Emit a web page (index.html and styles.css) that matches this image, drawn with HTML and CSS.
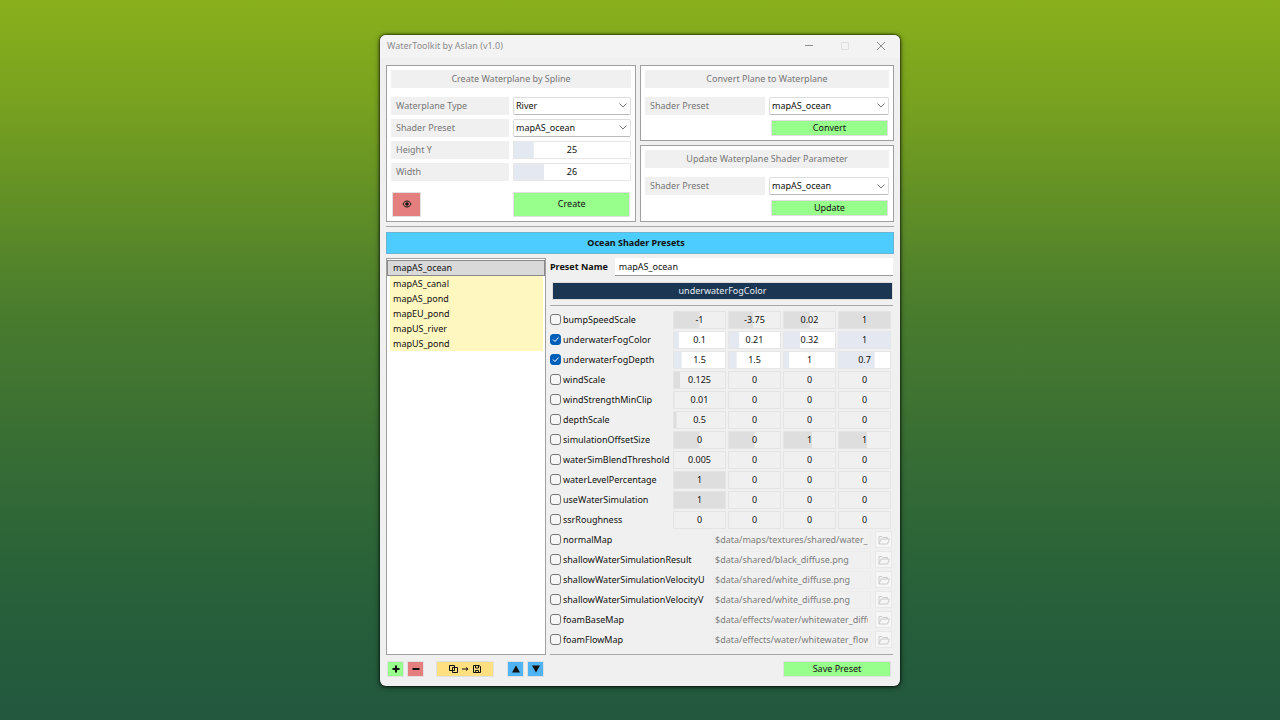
FILE: index.html
```
<!DOCTYPE html>
<html lang="en">
<head>
  <meta charset="UTF-8" />
  <meta name="viewport" content="width=device-width, initial-scale=1" />
  <title>WaterToolkit by Aslan (v1.0)</title>
  <link rel="stylesheet" href="styles.css">
</head>
<body>
  <main class="window">
    <header class="titlebar">
      <h1>WaterToolkit by Aslan (v1.0)</h1>
      <div class="window-buttons">
        <button type="button" aria-label="Minimize"><svg viewBox="0 0 10 10"><path d="M1 4.500h8" /></svg></button>
        <button type="button" class="faded" aria-label="Maximize"><svg viewBox="0 0 10 10"><path d="M1.5 1.5h7v7h-7z" /></svg></button>
        <button type="button" aria-label="Close"><svg viewBox="0 0 10 10"><path d="M1 1l8 8M9 1l-8 8" /></svg></button>
      </div>
    </header>

    <div class="tools">
      <section class="panel create">
        <h2>Create Waterplane by Spline</h2>
        <div class="form-row">
          <label for="plane-type">Waterplane Type</label>
          <select id="plane-type"><option>River</option></select>
        </div>
        <div class="form-row">
          <label for="create-preset">Shader Preset</label>
          <select id="create-preset"><option>mapAS_ocean</option></select>
        </div>
        <div class="form-row">
          <label for="height-y">Height Y</label>
          <input class="num" id="height-y" value="25" style="--fill: 17%">
        </div>
        <div class="form-row">
          <label for="width">Width</label>
          <input class="num" id="width" value="26" style="--fill: 26%">
        </div>
        <div class="create-actions">
          <button type="button" class="btn red" aria-label="Toggle preview">
            <svg viewBox="0 0 10 10"><path d="M1 5C2 2.800 3.500 2 5 2s3 .8 4 3C8 7.200 6.500 8 5 8S2 7.200 1 5z" /><circle class="solid" cx="5" cy="5" r="1.800" /></svg>
          </button>
          <button type="button" class="btn green">Create</button>
        </div>
      </section>

      <div class="tools-side">
        <section class="panel">
          <h2>Convert Plane to Waterplane</h2>
          <div class="form-row">
            <label for="convert-preset">Shader Preset</label>
            <select id="convert-preset"><option>mapAS_ocean</option></select>
          </div>
          <button type="button" class="btn green half">Convert</button>
        </section>
        <section class="panel">
          <h2>Update Waterplane Shader Parameter</h2>
          <div class="form-row">
            <label for="update-preset">Shader Preset</label>
            <select id="update-preset"><option>mapAS_ocean</option></select>
          </div>
          <button type="button" class="btn green half">Update</button>
        </section>
      </div>
    </div>

    <hr>
    <h2 class="banner">Ocean Shader Presets</h2>

    <div class="presets">
      <ul class="preset-list">
        <li class="selected">mapAS_ocean</li>
        <li>mapAS_canal</li>
        <li>mapAS_pond</li>
        <li>mapEU_pond</li>
        <li>mapUS_river</li>
        <li>mapUS_pond</li>
      </ul>

      <div class="editor">
        <div class="name-row">
          <label for="preset-name">Preset Name</label>
          <input id="preset-name" value="mapAS_ocean">
        </div>
        <button type="button" class="color-bar">underwaterFogColor</button>
        <hr>

        <div class="param off">
          <label><input type="checkbox">bumpSpeedScale</label>
          <input class="num" aria-label="bumpSpeedScale x" value="-1" style="--fill: 50%">
          <input class="num" aria-label="bumpSpeedScale y" value="-3.75" style="--fill: 47%">
          <input class="num" aria-label="bumpSpeedScale z" value="0.02" style="--fill: 50%">
          <input class="num" aria-label="bumpSpeedScale w" value="1" style="--fill: 100%">
        </div>
        <div class="param">
          <label><input type="checkbox" checked>underwaterFogColor</label>
          <input class="num" aria-label="underwaterFogColor r" value="0.1" style="--fill: 10%">
          <input class="num" aria-label="underwaterFogColor g" value="0.21" style="--fill: 20%">
          <input class="num" aria-label="underwaterFogColor b" value="0.32" style="--fill: 32%">
          <input class="num" aria-label="underwaterFogColor a" value="1" style="--fill: 100%">
        </div>
        <div class="param">
          <label><input type="checkbox" checked>underwaterFogDepth</label>
          <input class="num" aria-label="underwaterFogDepth x" value="1.5" style="--fill: 15%">
          <input class="num" aria-label="underwaterFogDepth y" value="1.5" style="--fill: 15%">
          <input class="num" aria-label="underwaterFogDepth z" value="1" style="--fill: 10%">
          <input class="num" aria-label="underwaterFogDepth w" value="0.7" style="--fill: 70%">
        </div>
        <div class="param off">
          <label><input type="checkbox">windScale</label>
          <input class="num" aria-label="windScale x" value="0.125" style="--fill: 12%">
          <input class="num" aria-label="windScale y" value="0">
          <input class="num" aria-label="windScale z" value="0">
          <input class="num" aria-label="windScale w" value="0">
        </div>
        <div class="param off">
          <label><input type="checkbox">windStrengthMinClip</label>
          <input class="num" aria-label="windStrengthMinClip x" value="0.01" style="--fill: 1%">
          <input class="num" aria-label="windStrengthMinClip y" value="0">
          <input class="num" aria-label="windStrengthMinClip z" value="0">
          <input class="num" aria-label="windStrengthMinClip w" value="0">
        </div>
        <div class="param off">
          <label><input type="checkbox">depthScale</label>
          <input class="num" aria-label="depthScale x" value="0.5" style="--fill: 5%">
          <input class="num" aria-label="depthScale y" value="0">
          <input class="num" aria-label="depthScale z" value="0">
          <input class="num" aria-label="depthScale w" value="0">
        </div>
        <div class="param off">
          <label><input type="checkbox">simulationOffsetSize</label>
          <input class="num" aria-label="simulationOffsetSize x" value="0" style="--fill: 50%">
          <input class="num" aria-label="simulationOffsetSize y" value="0" style="--fill: 50%">
          <input class="num" aria-label="simulationOffsetSize z" value="1" style="--fill: 55%">
          <input class="num" aria-label="simulationOffsetSize w" value="1" style="--fill: 55%">
        </div>
        <div class="param off">
          <label><input type="checkbox">waterSimBlendThreshold</label>
          <input class="num" aria-label="waterSimBlendThreshold x" value="0.005">
          <input class="num" aria-label="waterSimBlendThreshold y" value="0">
          <input class="num" aria-label="waterSimBlendThreshold z" value="0">
          <input class="num" aria-label="waterSimBlendThreshold w" value="0">
        </div>
        <div class="param off">
          <label><input type="checkbox">waterLevelPercentage</label>
          <input class="num" aria-label="waterLevelPercentage x" value="1" style="--fill: 100%">
          <input class="num" aria-label="waterLevelPercentage y" value="0">
          <input class="num" aria-label="waterLevelPercentage z" value="0">
          <input class="num" aria-label="waterLevelPercentage w" value="0">
        </div>
        <div class="param off">
          <label><input type="checkbox">useWaterSimulation</label>
          <input class="num" aria-label="useWaterSimulation x" value="1" style="--fill: 100%">
          <input class="num" aria-label="useWaterSimulation y" value="0">
          <input class="num" aria-label="useWaterSimulation z" value="0">
          <input class="num" aria-label="useWaterSimulation w" value="0">
        </div>
        <div class="param off">
          <label><input type="checkbox">ssrRoughness</label>
          <input class="num" aria-label="ssrRoughness x" value="0">
          <input class="num" aria-label="ssrRoughness y" value="0">
          <input class="num" aria-label="ssrRoughness z" value="0">
          <input class="num" aria-label="ssrRoughness w" value="0">
        </div>

        <div class="texture">
          <label><input type="checkbox">normalMap</label>
          <input class="path" aria-label="normalMap path" value="$data/maps/textures/shared/water_normal.png">
          <button type="button" class="browse" aria-label="Browse"><svg viewBox="0 0 12 10"><path d="M1 9V1.500h3l1 1h4.500V4M1 9l2-5h8.500l-2 5z" /></svg></button>
        </div>
        <div class="texture">
          <label><input type="checkbox">shallowWaterSimulationResult</label>
          <input class="path" aria-label="shallowWaterSimulationResult path" value="$data/shared/black_diffuse.png">
          <button type="button" class="browse" aria-label="Browse"><svg viewBox="0 0 12 10"><path d="M1 9V1.500h3l1 1h4.500V4M1 9l2-5h8.500l-2 5z" /></svg></button>
        </div>
        <div class="texture">
          <label><input type="checkbox">shallowWaterSimulationVelocityU</label>
          <input class="path" aria-label="shallowWaterSimulationVelocityU path" value="$data/shared/white_diffuse.png">
          <button type="button" class="browse" aria-label="Browse"><svg viewBox="0 0 12 10"><path d="M1 9V1.500h3l1 1h4.500V4M1 9l2-5h8.500l-2 5z" /></svg></button>
        </div>
        <div class="texture">
          <label><input type="checkbox">shallowWaterSimulationVelocityV</label>
          <input class="path" aria-label="shallowWaterSimulationVelocityV path" value="$data/shared/white_diffuse.png">
          <button type="button" class="browse" aria-label="Browse"><svg viewBox="0 0 12 10"><path d="M1 9V1.500h3l1 1h4.500V4M1 9l2-5h8.500l-2 5z" /></svg></button>
        </div>
        <div class="texture">
          <label><input type="checkbox">foamBaseMap</label>
          <input class="path" aria-label="foamBaseMap path" value="$data/effects/water/whitewater_diffuse.png">
          <button type="button" class="browse" aria-label="Browse"><svg viewBox="0 0 12 10"><path d="M1 9V1.500h3l1 1h4.500V4M1 9l2-5h8.500l-2 5z" /></svg></button>
        </div>
        <div class="texture">
          <label><input type="checkbox">foamFlowMap</label>
          <input class="path" aria-label="foamFlowMap path" value="$data/effects/water/whitewater_flow.png">
          <button type="button" class="browse" aria-label="Browse"><svg viewBox="0 0 12 10"><path d="M1 9V1.500h3l1 1h4.500V4M1 9l2-5h8.500l-2 5z" /></svg></button>
        </div>
        <hr class="end">
      </div>
    </div>

    <footer class="actions">
      <button type="button" class="btn green square" aria-label="Add preset"><svg viewBox="0 0 10 10"><path class="thick" d="M5 1.500v7M1.500 5h7" /></svg></button>
      <button type="button" class="btn red square" aria-label="Remove preset"><svg viewBox="0 0 10 10"><path class="thick" d="M1.500 5h7" /></svg></button>
      <button type="button" class="btn yellow" aria-label="Copy to file">
        <svg class="wide" viewBox="0 0 32 10"><path d="M.5 1.500h5v5h-5zM3.500 3.500h5v5h-5zM13 5h6M17 3.500L19 5l-2 1.500M24.500 1.500H30l1.500 1v6h-7zM26.500 1.500V4h3V1.500M26.500 8.500V6.500h3v2" /></svg>
      </button>
      <button type="button" class="btn blue square" aria-label="Move up"><svg viewBox="0 0 10 10"><path class="solid" d="M5 1.500L9 8.500H1z" /></svg></button>
      <button type="button" class="btn blue square" aria-label="Move down"><svg viewBox="0 0 10 10"><path class="solid" d="M1 1.500h8L5 8.500z" /></svg></button>
      <button type="button" class="btn green save">Save Preset</button>
    </footer>
  </main>
</body>
</html>
```
FILE: styles.css
```
* {
  box-sizing: border-box;
}
body {
  margin: 0;
  min-height: 100vh;
  display: flex;
  align-items: center;
  justify-content: center;
  background: linear-gradient(#89b01c 0%, #7aa31f 13%, #4b7d2d 42%, #356b35 65%, #27603a 83%, #22573e 100%);
  font-family: "Noto Sans", "Open Sans", sans-serif;
  font-size: 9px;
  line-height: 14px;
  color: #111;
}
h1, h2, ul {
  margin: 0;
  padding: 0;
  font-size: 9px;
  font-weight: normal;
}
input, select, button {
  margin: 0;
  font: inherit;
  color: inherit;
  min-width: 0;
}
button {
  padding: 0;
  border: 0;
  background: none;
}
svg {
  display: block;
  width: 10px;
  height: 10px;
  fill: none;
  stroke: currentColor;
}
hr {
  margin: 0;
  border: 0;
  border-top: 1px solid #a8a8a8;
}

/* Window frame */
.window {
  width: 100%;
  max-width: 520px;
  padding: 0 6px 9px;
  background: #f0f0f0;
  border-radius: 6px;
  box-shadow: 0 0 2px 1px rgba(0,0,0,0.5), 0 1px 6px rgba(0,0,0,0.5);
}
.titlebar {
  display: flex;
  align-items: center;
  justify-content: space-between;
  height: 23px;
  margin: 0 -6px 7px;
  padding: 0 14px 0 7px;
  background: #f3f3f3;
  border-radius: 6px 6px 0 0;
  color: #8c8c8c;
}
.window-buttons {
  display: flex;
  gap: 26px;
}
.faded {
  opacity: 0.2;
}

/* Top panels */
.tools {
  display: grid;
  grid-template-columns: 250fr 254fr;
  gap: 4px;
  margin-bottom: 4px;
}
.tools-side {
  display: flex;
  flex-direction: column;
  gap: 4px;
}
.panel {
  flex: 1;
  padding: 4px;
  background: #fff;
  border: 1px solid #a0a0a0;
}
.panel h2 {
  height: 18px;
  margin-bottom: 9px;
  line-height: 18px;
  text-align: center;
  background: #f0f0f0;
  color: #777;
}
.form-row {
  display: grid;
  grid-template-columns: 1fr 1fr;
  gap: 4px;
  height: 18px;
  margin-bottom: 4px;
}
.form-row label {
  padding-left: 5px;
  line-height: 18px;
  background: #f0f0f0;
  color: #777;
}
select {
  width: 100%;
  height: 18px;
  padding: 0 12px 0 2px;
  appearance: none;
  border: 1px solid #ddd;
  border-bottom-color: #bbb;
  border-radius: 2px;
  background: #fff url("data:image/svg+xml,%3Csvg xmlns='http://www.w3.org/2000/svg' width='8' height='5' fill='none' stroke='%23777'%3E%3Cpath d='M.5.5L4 4 7.500.5'/%3E%3C/svg%3E") no-repeat right 3px center;
}
.num {
  width: 100%;
  height: 18px;
  padding: 0;
  text-align: center;
  border: 1px solid #e6e6e6;
  background: linear-gradient(#e3e8f1, #e3e8f1) no-repeat 0 0 / var(--fill, 0%) 100% #fff;
}
.create-actions {
  display: flex;
  justify-content: space-between;
  margin: 11px 1px 0;
}
.create-actions .btn {
  height: 25px;
}
.create-actions .red {
  width: 29px;
}
.create-actions .green {
  width: 49%;
}
.half {
  display: block;
  width: 48%;
  margin: 5px 1px 0 auto;
}

/* Buttons */
.btn {
  height: 16px;
  border: 1px solid #e0e0e0;
  border-radius: 1px;
}
.btn svg {
  margin: auto;
}
.green {
  background: #98ff8c;
}
.red {
  background: #e57e7e;
}
.yellow {
  background: #ffdf80;
}
.blue {
  background: #4fb3f4;
}
.thick {
  stroke-width: 2;
}
.solid {
  fill: #111;
  stroke: none;
}

/* Presets */
.banner {
  margin-top: 5px;
  padding-right: 8px;
  height: 22px;
  line-height: 20px;
  font-weight: bold;
  text-align: center;
  background: #4cccff;
  border: 1px solid #6cb4d4;
}
.presets {
  display: grid;
  grid-template-columns: 160px minmax(0, 1fr);
  gap: 4px;
  margin-top: 4px;
}
.preset-list {
  padding: 1px;
  list-style: none;
  background: #fff;
  border: 1px solid #a0a0a0;
}
.preset-list li {
  height: 15px;
  margin: 0 1px 0 2px;
  padding-left: 3px;
  line-height: 15px;
  background: #fff7c0;
}
.preset-list .selected {
  height: 16px;
  margin: 0 -1px;
  padding-left: 5px;
  line-height: 14px;
  background: #d9d9d9;
  border: 1px solid #8a8a8a;
}
.editor {
  padding-right: 1px;
}
.name-row {
  display: flex;
  align-items: center;
  gap: 7px;
  height: 18px;
}
.name-row label {
  font-weight: bold;
}
.name-row input {
  flex: 1;
  height: 18px;
  padding: 0 4px;
  border: 0;
  border-bottom: 1px solid #999;
  background: #fff;
}
.color-bar {
  display: block;
  width: calc(100% - 2px);
  height: 18px;
  margin: 6px 0 5px 2px;
  border: 1px solid #ddd;
  background: #1a3652;
  color: #e8eef4;
}
.editor hr {
  margin-bottom: 4px;
}
.param {
  display: grid;
  grid-template-columns: minmax(0, 1fr) repeat(4, 53px);
  gap: 2px;
  height: 20px;
  padding-right: 2px;
  align-items: center;
}
.param label, .texture label {
  display: flex;
  align-items: center;
  gap: 2px;
  white-space: nowrap;
}
.off .num {
  border-color: #e4e4e4;
  background: linear-gradient(#dedede, #dedede) no-repeat 0 0 / var(--fill, 0%) 100% #f0f0f0;
}
input[type="checkbox"] {
  width: 11px;
  height: 11px;
  appearance: none;
  border: 1px solid #777;
  border-radius: 3px;
  background: #f6f6f6;
}
input[type="checkbox"]:checked {
  border-color: #005fb8;
  background: #005fb8 url("data:image/svg+xml,%3Csvg xmlns='http://www.w3.org/2000/svg' width='9' height='9' fill='none' stroke='white'%3E%3Cpath d='M2 4.500l2 2 3.500-4'/%3E%3C/svg%3E") no-repeat center;
}
.texture {
  display: grid;
  grid-template-columns: minmax(0, 1fr) 158px 17px;
  gap: 4px;
  height: 20px;
  padding-right: 1px;
  align-items: center;
}
.path {
  height: 18px;
  padding: 0 2px 0 1px;
  border: 1px solid #ececec;
  background: #f0f0f0;
  color: #7d7d7d;
}
.browse {
  height: 17px;
  border: 1px solid #e8e8e8;
  background: #f6f6f6;
  color: #ccc;
}
.browse svg {
  width: 12px;
  margin: auto;
}
.editor .end {
  margin: 4px 0 0;
}

/* Bottom bar */
.actions {
  display: flex;
  gap: 3px;
  margin: 6px 3px 0 1px;
}
.square {
  width: 17px;
}
.yellow {
  width: 58px;
  margin: 0 10px 0 9px;
}
.wide {
  width: 32px;
}
.save {
  width: 108px;
  margin-left: auto;
}
```
